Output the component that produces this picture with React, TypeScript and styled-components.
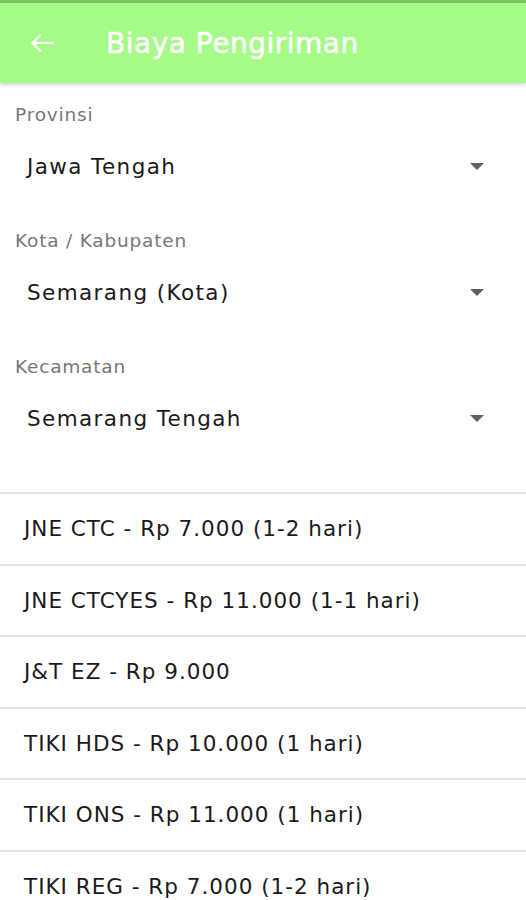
import React from "react";
import styled, { createGlobalStyle } from "styled-components";

const Global = createGlobalStyle`
  html, body { margin: 0; padding: 0; background: #ffffff; }
  body { font-family: "DejaVu Sans", "Noto Sans", sans-serif; }
`;

const Screen = styled.div`
  width: 526px;
  height: 900px;
  overflow: hidden;
  background: #ffffff;
  display: flex;
  flex-direction: column;
  & > * { flex-shrink: 0; }
`;

const StatusStrip = styled.div`
  height: 3px;
  background: #7cc466;
`;

const AppBar = styled.header`
  height: 80px;
  background: #a6fb88;
  display: flex;
  align-items: center;
  padding-left: 30px;
  gap: 52px;
  box-shadow: 0 2px 4px rgba(0, 0, 0, 0.18);
  position: relative;
  z-index: 1;
`;

const BackIcon = styled.svg`
  width: 24px;
  height: 24px;
  flex: none;
`;

const Title = styled.h1`
  margin: 0;
  color: #ffffff;
  font-size: 28px;
  font-weight: normal;
  letter-spacing: 0.5px;
  -webkit-text-stroke: 0.5px #ffffff;
`;

const Form = styled.div`
  display: flex;
  flex-direction: column;
  padding-top: 21px;
`;

const Field = styled.div`
  display: flex;
  flex-direction: column;
  height: 126px;
`;

const Label = styled.div`
  padding-left: 15px;
  font-size: 18.5px;
  letter-spacing: 0.8px;
  color: #777777;
  line-height: 22px;
`;

const Select = styled.div`
  display: flex;
  align-items: center;
  justify-content: space-between;
  padding: 0 42px 0 27px;
  margin-top: 10px;
  height: 60px;
`;

const Value = styled.div`
  font-size: 21.5px;
  letter-spacing: 1.4px;
  color: #1a1a1a;
`;

const Caret = styled.svg`
  width: 14px;
  height: 7px;
`;

const List = styled.div`
  margin-top: 10px;
  display: flex;
  flex-direction: column;
`;

const Row = styled.div`
  box-sizing: border-box;
  height: 71.5px;
  flex-shrink: 0;
  border-top: 2px solid #e4e4e4;
  display: flex;
  align-items: center;
  padding-left: 24px;
  font-size: 21.5px;
  letter-spacing: 1px;
  color: #1a1a1a;
`;

const fields = [
  { label: "Provinsi", value: "Jawa Tengah" },
  { label: "Kota / Kabupaten", value: "Semarang (Kota)" },
  { label: "Kecamatan", value: "Semarang Tengah" },
];

const options = [
  "JNE CTC - Rp 7.000 (1-2 hari)",
  "JNE CTCYES - Rp 11.000 (1-1 hari)",
  "J&T EZ - Rp 9.000",
  "TIKI HDS - Rp 10.000 (1 hari)",
  "TIKI ONS - Rp 11.000 (1 hari)",
  "TIKI REG - Rp 7.000 (1-2 hari)",
];

export default function App() {
  return (
    <Screen>
      <Global />
      <StatusStrip />
      <AppBar>
        <BackIcon viewBox="0 0 24 24" fill="none" stroke="#ffffff" strokeWidth={2.2} strokeLinecap="square">
          <path d="M22.5 12H2.5" />
          <path d="M10 4.5L2.5 12L10 19.5" />
        </BackIcon>
        <Title>Biaya Pengiriman</Title>
      </AppBar>
      <Form>
        {fields.map((f) => (
          <Field key={f.label}>
            <Label>{f.label}</Label>
            <Select>
              <Value>{f.value}</Value>
              <Caret viewBox="0 0 14 7">
                <path d="M0 0H14L7 7Z" fill="#616161" />
              </Caret>
            </Select>
          </Field>
        ))}
      </Form>
      <List>
        {options.map((o) => (
          <Row key={o}>{o}</Row>
        ))}
      </List>
    </Screen>
  );
}
